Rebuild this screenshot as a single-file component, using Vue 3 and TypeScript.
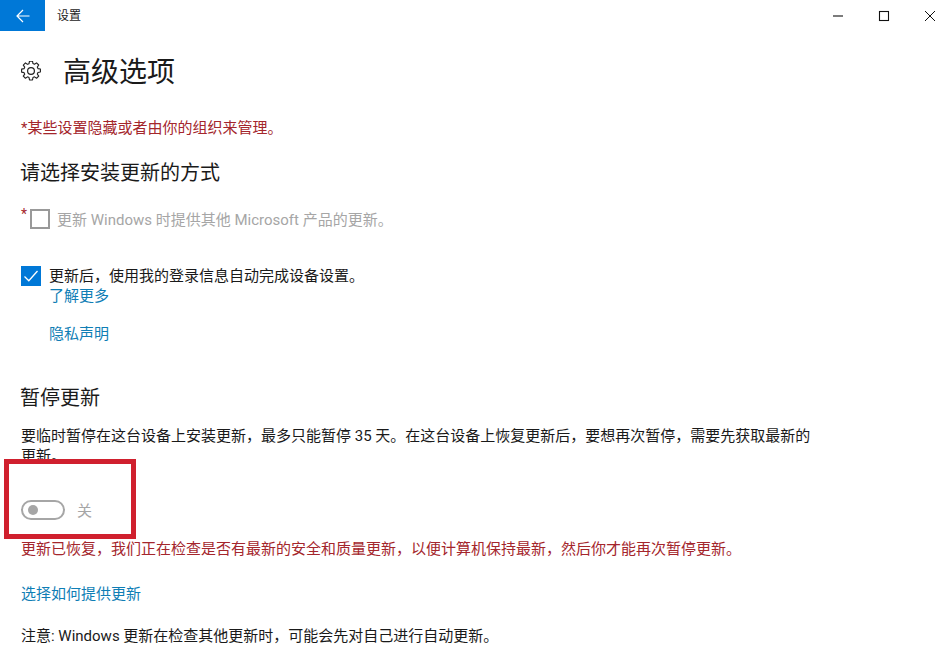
<script setup lang="ts">
const pauseText = '要临时暂停在这台设备上安装更新\uFF0C最多只能暂停 35 天。在这台设备上恢复更新后\uFF0C要想再次暂停\uFF0C需要先获取最新的更新。'
const loginText = '更新后\uFF0C使用我的登录信息自动完成设备设置。'
const resumedText = '更新已恢复\uFF0C我们正在检查是否有最新的安全和质量更新\uFF0C以便计算机保持最新\uFF0C然后你才能再次暂停更新。'
const noteText = '注意: Windows 更新在检查其他更新时\uFF0C可能会先对自己进行自动更新。'
</script>

<template>
  <div class="window">
    <header class="titlebar">
      <button class="back" aria-label="返回">
        <svg width="14" height="14" viewBox="0 0 14 14" fill="none" stroke="#fff" stroke-width="1.2">
          <path d="M1 7h12.5M7 1 1 7l6 6" />
        </svg>
      </button>
      <span class="app-title">设置</span>
      <div class="controls">
        <svg width="12" height="12" viewBox="0 0 12 12" fill="none" stroke="#111" stroke-width="1.1"><path d="M1 6h10" /></svg>
        <svg width="12" height="12" viewBox="0 0 12 12" fill="none" stroke="#111" stroke-width="1.1"><rect x="1.5" y="1.5" width="9" height="9" /></svg>
        <svg width="12" height="12" viewBox="0 0 12 12" fill="none" stroke="#111" stroke-width="1"><path d="M1 1l10 10M11 1 1 11" /></svg>
      </div>
    </header>

    <main class="content">
      <div class="page-head">
        <svg class="gear" width="20" height="20" viewBox="0 0 20 20" fill="none" stroke="#222" stroke-width="1.2" stroke-linejoin="round">
          <path d="M8.4 .8h3.2l.5 2.6 1.6.7 2.2-1.5 2.3 2.3-1.5 2.2.7 1.6 2.6.5v3.2l-2.6.5-.7 1.6 1.5 2.2-2.3 2.3-2.2-1.5-1.6.7-.5 2.6H8.4l-.5-2.6-1.6-.7-2.2 1.5L1.8 16.8l1.5-2.2-.7-1.6L0 12.5V9.3l2.6-.5.7-1.6-1.5-2.2L4.1 2.7l2.2 1.5 1.600-.7z" transform="translate(.6 -.6) scale(.94)" />
          <circle cx="10" cy="10" r="3.4" />
        </svg>
        <h1>高级选项</h1>
      </div>

      <p class="red managed">*某些设置隐藏或者由你的组织来管理。</p>

      <h2 class="first-h2">请选择安装更新的方式</h2>

      <div class="check-row disabled-row">
        <span class="star">*</span>
        <span class="box"></span>
        <span class="label-disabled">更新 Windows 时提供其他 Microsoft 产品的更新。</span>
      </div>

      <div class="check-row checked-row">
        <span class="box-checked">
          <svg width="20" height="20" viewBox="0 0 20 20" fill="none" stroke="#fff" stroke-width="1.3"><path d="M3.5 10.5l4.3 4.3L16.5 5" /></svg>
        </span>
        <div class="check-text">
          <span class="label">{{ loginText }}</span>
          <a class="link">了解更多</a>
          <a class="link privacy">隐私声明</a>
        </div>
      </div>

      <h2 class="pause-h2">暂停更新</h2>
      <p class="pause-text">{{ pauseText }}</p>

      <div class="toggle-row">
        <span class="toggle"><span class="knob"></span></span>
        <span class="toggle-label">关</span>
      </div>

      <p class="red resumed">{{ resumedText }}</p>
      <a class="link delivery">选择如何提供更新</a>
      <p class="note">{{ noteText }}</p>
    </main>

    <div class="annotation"></div>
  </div>
</template>

<style scoped>
.window {
  position: relative;
  width: 949px;
  height: 659px;
  overflow: hidden;
  background: #fff;
  color: #1a1a1a;
  font-family: Roboto, "Noto Sans CJK SC", sans-serif;
  font-size: 15px;
}
.titlebar {
  display: flex;
  align-items: center;
  height: 31px;
}
.back {
  display: flex;
  align-items: center;
  justify-content: center;
  width: 45px;
  height: 31px;
  padding: 0;
  border: 0;
  background: #0078d7;
}
.app-title {
  margin-left: 12px;
  margin-top: -2px;
  font-size: 12px;
}
.controls {
  display: flex;
  align-items: center;
  gap: 34px;
  margin-left: auto;
  margin-right: 13px;
}
.content {
  display: flex;
  flex-direction: column;
  align-items: flex-start;
  padding: 0 21px;
}
.page-head {
  display: flex;
  align-items: center;
  height: 40px;
  margin-top: 20px;
}
.gear {
  margin-right: 23px;
}
h1 {
  margin: 4px 0 0 -1px;
  font-size: 28px;
  font-weight: 400;
  line-height: 40px;
}
h2 {
  margin: 0 0 0 -1px;
  font-size: 20px;
  font-weight: 400;
  line-height: 28px;
}
p {
  margin: 0;
}
.red {
  color: #a4262c;
  font-size: 15px;
  line-height: 20px;
}
.managed {
  margin-top: 27px;
}
.first-h2 {
  margin-top: 21px;
}
.check-row {
  display: flex;
}
.disabled-row {
  position: relative;
  align-items: center;
  height: 20px;
  margin-top: 22px;
  padding-left: 9px;
}
.star {
  position: absolute;
  left: 0;
  top: -5px;
  color: #a4262c;
  font-size: 14px;
  line-height: 20px;
}
.box {
  box-sizing: border-box;
  width: 20px;
  height: 20px;
  border: 2px solid #999;
}
.label-disabled {
  margin-left: 7px;
  margin-top: -2px;
  color: #a6a6a6;
}
.checked-row {
  margin-top: 37px;
}
.box-checked {
  display: flex;
  width: 20px;
  height: 20px;
  background: #0078d7;
}
.check-text {
  display: flex;
  flex-direction: column;
  align-items: flex-start;
  margin-left: 8px;
  line-height: 20px;
}
.label {
  line-height: 20px;
}
.link {
  color: #0f7eb5;
  font-size: 15px;
  line-height: 20px;
}
.privacy {
  margin-top: 18px;
}
.pause-h2 {
  margin-top: 40px;
}
.pause-text {
  width: 800px;
  margin-top: 14px;
  line-height: 20px;
}
.toggle-row {
  display: flex;
  align-items: center;
  margin-top: 33px;
}
.toggle {
  box-sizing: border-box;
  display: flex;
  align-items: center;
  width: 44px;
  height: 20px;
  padding-left: 5px;
  border: 2px solid #a6a6a6;
  border-radius: 10px;
}
.knob {
  width: 10px;
  height: 10px;
  border-radius: 50%;
  background: #a6a6a6;
}
.toggle-label {
  margin-left: 12px;
  color: #a6a6a6;
}
.resumed {
  margin-top: 19px;
}
.delivery {
  margin-top: 25px;
}
.note {
  margin-top: 22px;
  line-height: 20px;
}
.annotation {
  position: absolute;
  left: 4px;
  top: 459px;
  box-sizing: border-box;
  width: 132px;
  height: 80px;
  border: 5px solid #d0202e;
  pointer-events: none;
}
</style>
